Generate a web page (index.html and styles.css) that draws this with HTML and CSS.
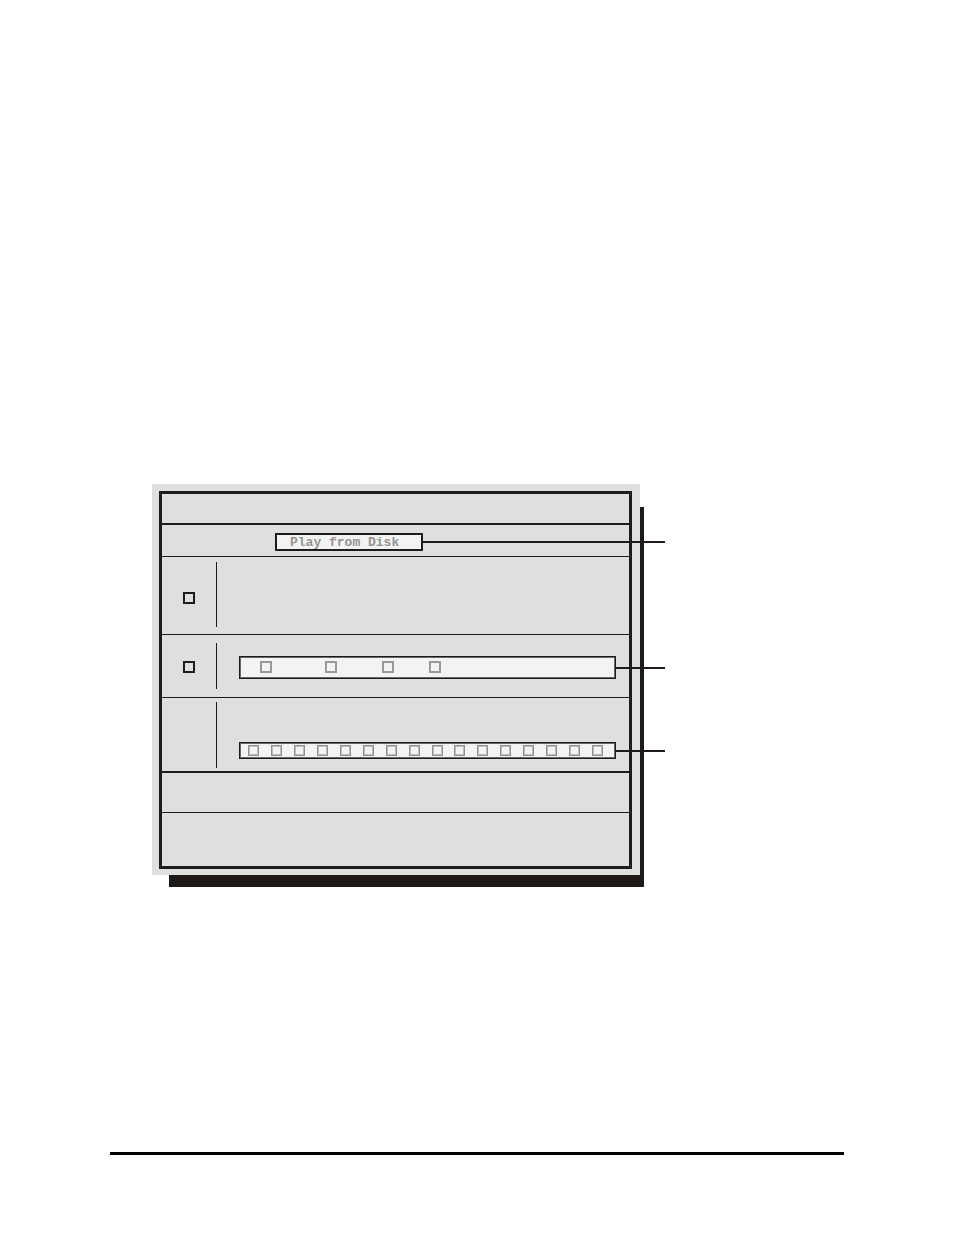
FILE: index.html
```html
<!DOCTYPE html>
<html lang="en">
    <head>
        <meta charset="UTF-8" />
        <meta name="viewport" content="width=device-width, initial-scale=1.0" />
        <title>Play from Disk</title>
        <link rel="stylesheet" href="styles.css">
    </head>
    <body>
        <main class="page">
            <form class="panel">
                <div class="panel-frame">
                    <div class="row row-head"></div>
                    <div class="row row-title">
                        <input class="title-field" type="text" value="Play from Disk" aria-label="Mode" />
                        <span class="leader"></span>
                    </div>
                    <div class="row row-first">
                        <div class="row-side">
                            <input class="check" type="checkbox" aria-label="Section 1" />
                        </div>
                    </div>
                    <div class="row row-options">
                        <div class="row-side">
                            <input class="check" type="checkbox" aria-label="Section 2" />
                        </div>
                        <div class="row-main">
                            <div class="bar bar-options">
                                <input class="check check-grey" type="checkbox" aria-label="Option 1" />
                                <input class="check check-grey" type="checkbox" aria-label="Option 2" />
                                <input class="check check-grey" type="checkbox" aria-label="Option 3" />
                                <input class="check check-grey" type="checkbox" aria-label="Option 4" />
                            </div>
                            <span class="leader"></span>
                        </div>
                    </div>
                    <div class="row row-channels">
                        <div class="row-side"></div>
                        <div class="row-main">
                            <div class="bar bar-channels">
                                <input class="check check-small" type="checkbox" aria-label="Channel 1" />
                                <input class="check check-small" type="checkbox" aria-label="Channel 2" />
                                <input class="check check-small" type="checkbox" aria-label="Channel 3" />
                                <input class="check check-small" type="checkbox" aria-label="Channel 4" />
                                <input class="check check-small" type="checkbox" aria-label="Channel 5" />
                                <input class="check check-small" type="checkbox" aria-label="Channel 6" />
                                <input class="check check-small" type="checkbox" aria-label="Channel 7" />
                                <input class="check check-small" type="checkbox" aria-label="Channel 8" />
                                <input class="check check-small" type="checkbox" aria-label="Channel 9" />
                                <input class="check check-small" type="checkbox" aria-label="Channel 10" />
                                <input class="check check-small" type="checkbox" aria-label="Channel 11" />
                                <input class="check check-small" type="checkbox" aria-label="Channel 12" />
                                <input class="check check-small" type="checkbox" aria-label="Channel 13" />
                                <input class="check check-small" type="checkbox" aria-label="Channel 14" />
                                <input class="check check-small" type="checkbox" aria-label="Channel 15" />
                                <input class="check check-small" type="checkbox" aria-label="Channel 16" />
                            </div>
                            <span class="leader"></span>
                        </div>
                    </div>
                    <div class="row row-status"></div>
                    <div class="row row-foot"></div>
                </div>
            </form>
            <hr class="page-rule" />
        </main>
    </body>
</html>
```

FILE: styles.css
```css
* {
    box-sizing: border-box;
}
body {
    margin: 0;
    background-color: #fff;
}

.page {
    display: flex;
    flex-flow: column;
    min-height: 100vh;
    padding: 484px 110px 80px;
}
.page-rule {
    width: 100%;
    height: 3px;
    margin: auto 0 0;
    border: 0;
    background-color: #000;
}

.panel {
    position: relative;
    z-index: 0;
    width: 66.5%;
    margin-left: 42px;
    padding: 7px 8px 6px 7px;
    background-color: #dfdfdd;
}
/* hard shadow behind the panel */
.panel::before {
    content: "";
    position: absolute;
    z-index: -2;
    top: 23px;
    left: 17px;
    right: -4px;
    bottom: -12px;
    background-color: #1f1a17;
}
.panel::after {
    content: "";
    position: absolute;
    z-index: -1;
    inset: 0;
    background-color: #dfdfdd;
}
.panel-frame {
    border: 3px solid #1f1a1b;
}

.row {
    display: flex;
    border-bottom: 1px solid #1f1a1b;
}
.row-head {
    height: 31px;
    border-bottom-width: 2px;
}
.row-title {
    height: 32px;
    padding: 8px 0 5px 113px;
    align-items: center;
}
.row-first {
    height: 78px;
    padding: 5px 0 7px;
}
.row-options {
    height: 63px;
    padding: 8px 0;
}
.row-channels {
    height: 75px;
    padding: 4px 0 3px;
    border-bottom-width: 2px;
}
.row-status {
    height: 40px;
}
.row-foot {
    height: 53px;
    border-bottom: 0;
}

.row-side {
    display: flex;
    flex: none;
    align-items: center;
    justify-content: center;
    width: 55px;
    padding-top: 2px;
    border-right: 1px solid #1f1a1b;
}
.row-first .row-side {
    padding-top: 6px;
}
.row-main {
    display: flex;
    flex: 1;
    align-items: center;
    padding: 3px 0 0 22px;
}
.row-channels .row-main {
    align-items: flex-end;
    padding-bottom: 9px;
}

.title-field {
    flex: none;
    width: 148px;
    height: 18px;
    padding: 0 0 0 13px;
    border: 2px solid #1f1a1b;
    border-radius: 0;
    background-color: #f3f3f3;
    color: #949494;
    font: bold 13px/14px "Liberation Mono", monospace;
}

.bar {
    display: flex;
    flex: none;
    align-items: center;
    width: calc(100% - 13px);
    border: 1px solid #1f1a1b;
    box-shadow: inset 0 0 0 1px #6b6566;
    background-color: #f3f3f3;
}
.bar-options {
    height: 23px;
    padding: 0 0 1px 20px;
}
.bar-options .check:nth-child(2) {
    margin-left: 53px;
}
.bar-options .check:nth-child(3) {
    margin-left: 45px;
}
.bar-options .check:nth-child(4) {
    margin-left: 35px;
}
.bar-channels {
    justify-content: space-between;
    height: 17px;
    padding: 0 12px 0 8px;
}

/* callout line, runs out past the right side of the panel */
.leader {
    flex: 1;
    height: 2px;
    margin-right: -36px;
    background-color: #1f1a1b;
}
.row-channels .leader {
    margin-bottom: 7px;
}

.check {
    flex: none;
    width: 12px;
    height: 12px;
    margin: 0;
    border: 2px solid #1f1a1b;
    border-radius: 0;
    appearance: none;
}
.check-grey {
    border-color: #999;
}
.check-small {
    width: 11px;
    height: 11px;
    border: 1px solid #919191;
    box-shadow: inset 0 0 0 1px #bcbcbc;
}
.check:checked {
    background-color: #1f1a1b;
}
```
